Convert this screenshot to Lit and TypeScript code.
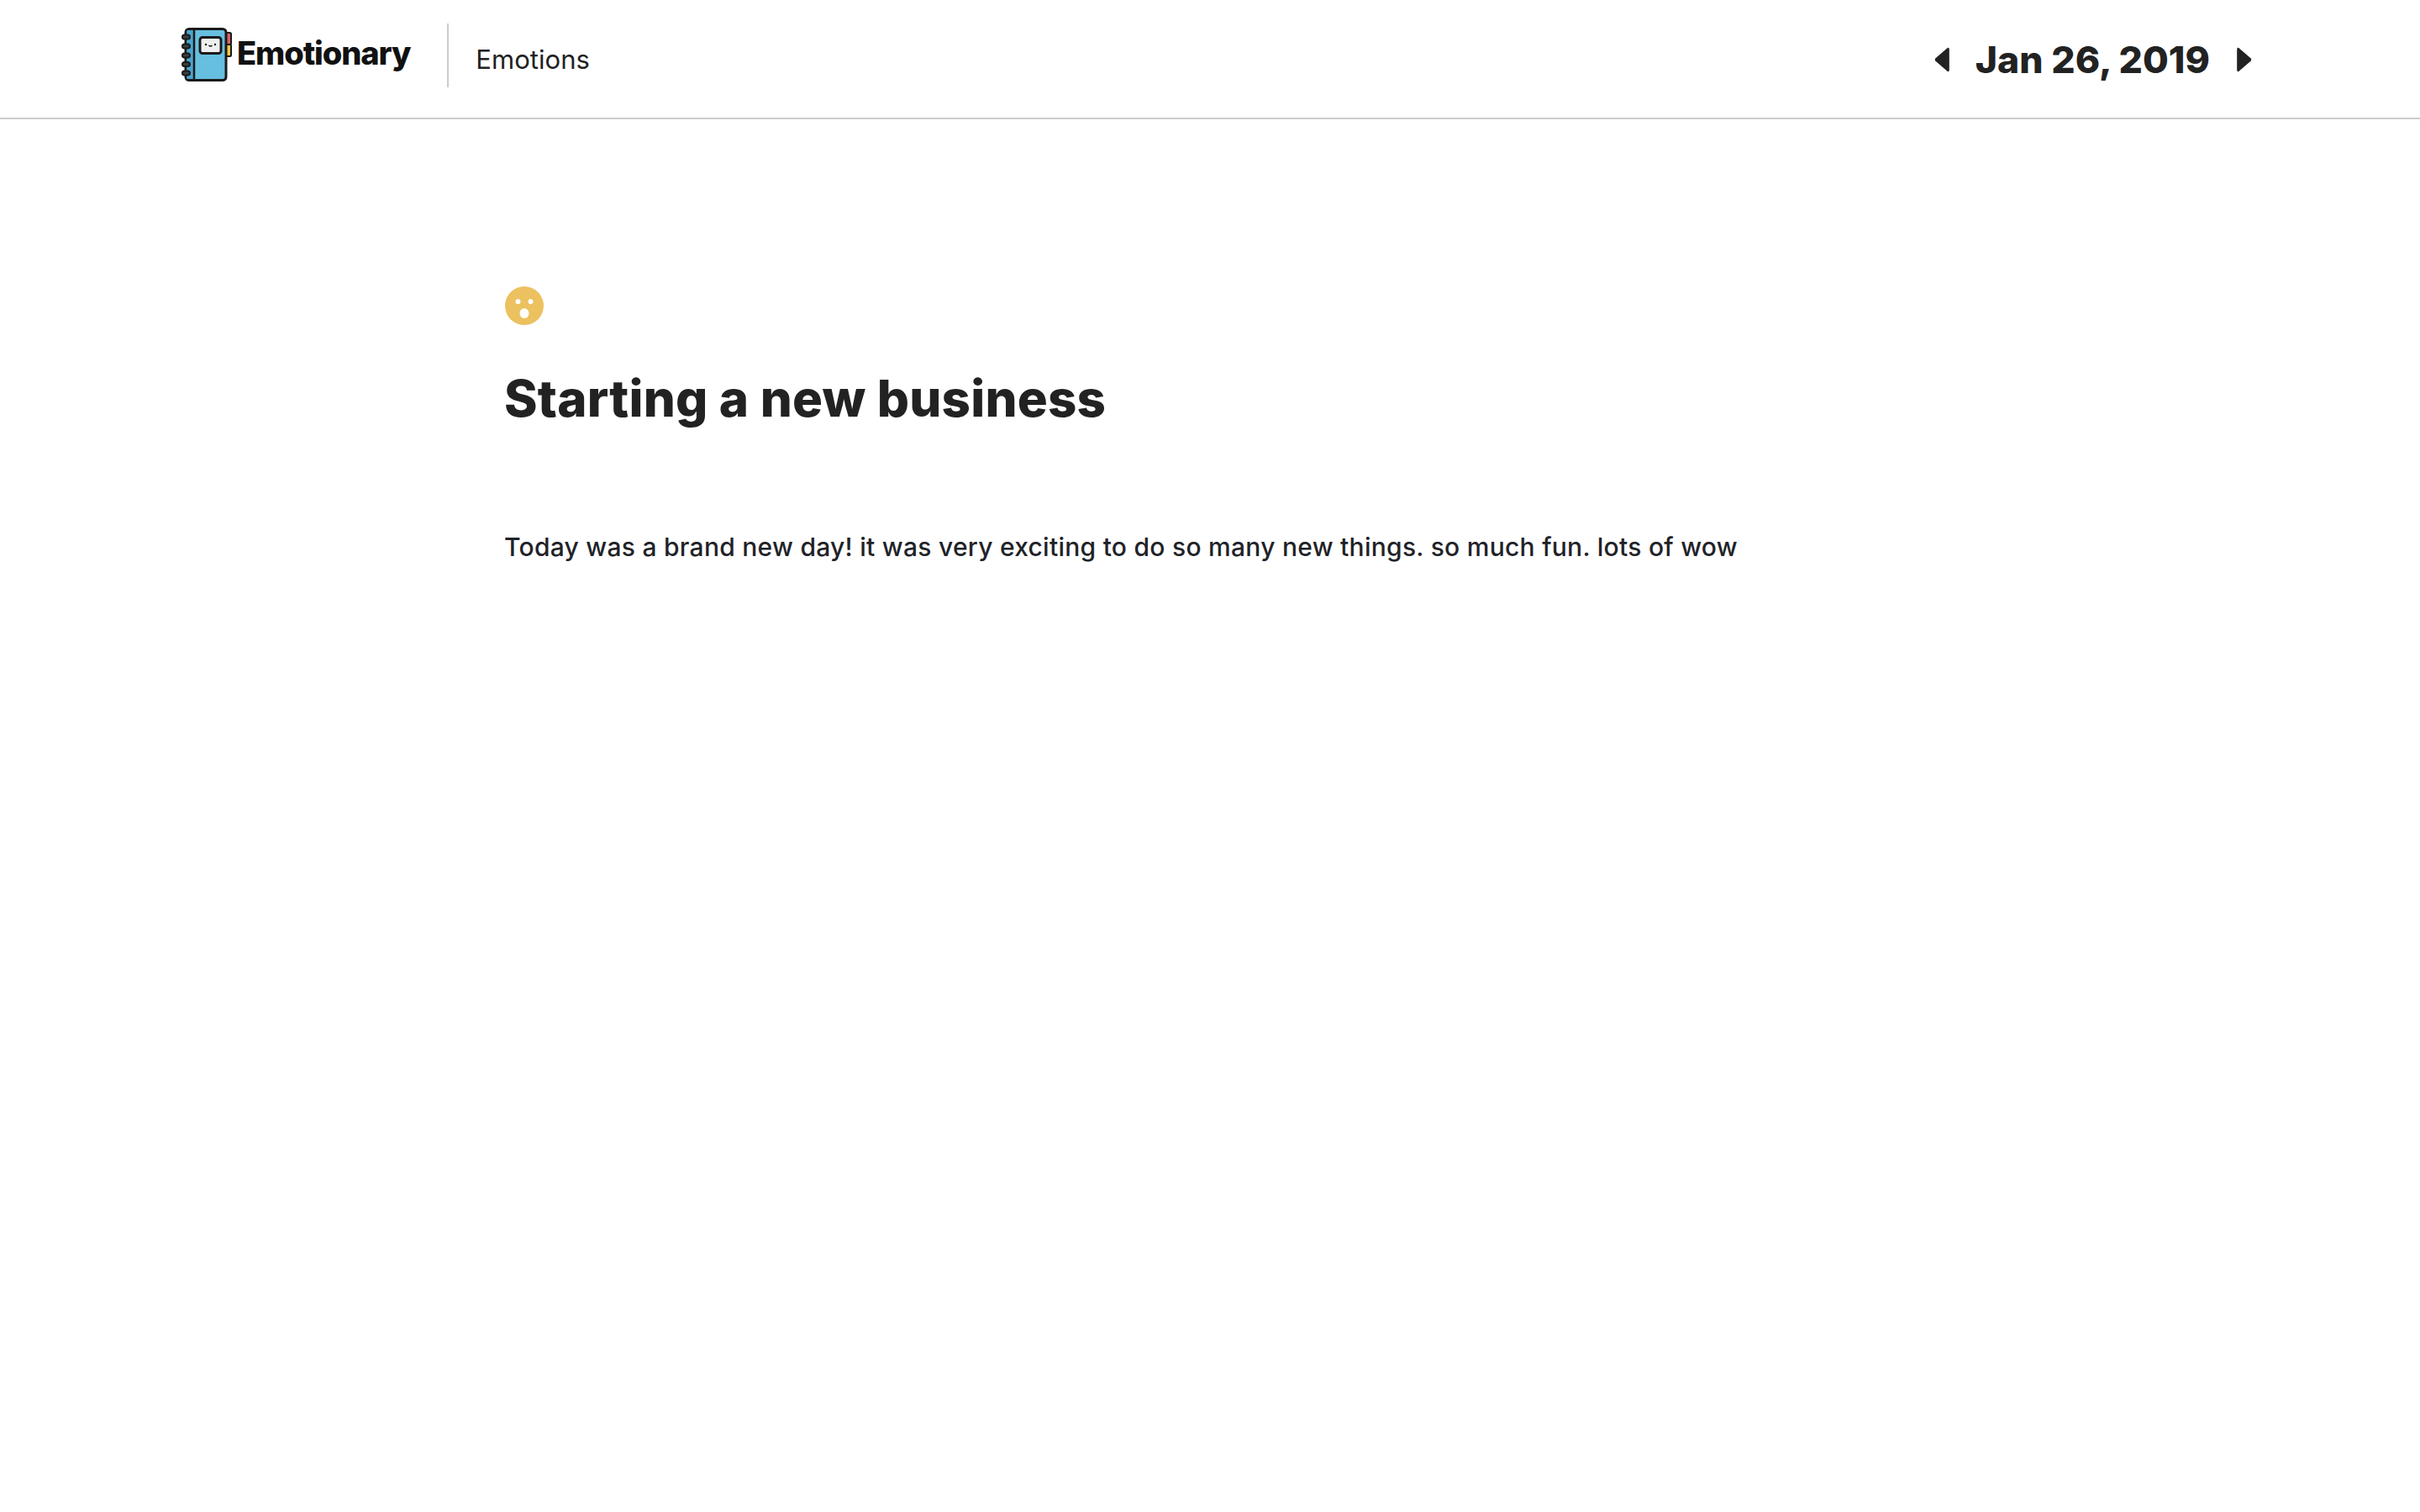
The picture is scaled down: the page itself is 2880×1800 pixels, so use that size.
import { LitElement, html, css } from "lit";
import { customElement } from "lit/decorators.js";

@customElement("app-root")
export class AppRoot extends LitElement {
  static styles = css`
    :host { display: block; width: 2880px; height: 1800px; background: #fff; color: #222; font-family: Inter, "Liberation Sans", sans-serif; }
    .header { box-sizing: border-box; height: 142px; border-bottom: 2px solid #ccc; display: flex; align-items: flex-start; justify-content: space-between; padding: 0 200px 0 216px; }
    .left { display: flex; align-items: flex-start; }
    .logo { display: flex; align-items: center; margin-top: 33px; }
    .logo svg { display: block; width: 60px; height: 64px; }
    .brand { font-weight: 800; font-size: 38px; line-height: 46px; letter-spacing: -1.1px; color: #111; margin-left: 6px; margin-top: -4px; }
    .divider { width: 2px; height: 76px; background: #ccc; margin: 28px 32px 0 44px; }
    .nav { font-size: 31px; line-height: 38px; margin-top: 52px; font-weight: 400; letter-spacing: 0.05px; }
    .date { display: flex; align-items: center; margin-top: 48px; }
    .date svg { display: block; width: 18px; height: 30px; fill: #222; }
    .date span { font-weight: 800; font-size: 44.5px; line-height: 46px; letter-spacing: 0.05px; margin: 0 32px 0 31px; }
    main { padding: 198px 0 0 600px; }
    .emoji { display: block; width: 48px; height: 48px; }
    h1 { margin: 48px 0 0; font-weight: 800; font-size: 60px; line-height: 76px; letter-spacing: 0.2px; }
    p { margin: 120px 0 0; font-weight: 500; font-size: 30px; line-height: 38px; letter-spacing: 0.27px; color: #1f2328; }
  `;

  render() {
    return html`
      <header class="header">
        <div class="left">
          <div class="logo">
            <svg viewBox="0 0 60 64">
              <rect x="50" y="6" width="9" height="14" rx="1.500" fill="#d9606a" stroke="#1a1a1a" stroke-width="2"/>
              <rect x="50" y="20" width="9" height="14" rx="1.500" fill="#f2c744" stroke="#1a1a1a" stroke-width="2"/>
              <rect x="5" y="1.500" width="48" height="61" rx="4" fill="#67bfe0" stroke="#1a1a1a" stroke-width="3"/>
              <path d="M6.500 3h8.500v58h-8.500z" fill="#4aa5cc"/>
              <path d="M15 2v60" stroke="#1a1a1a" stroke-width="2.500"/>
              <rect x="22" y="11.500" width="25" height="19" rx="3" fill="#f0f0f0" stroke="#1a1a1a" stroke-width="3"/>
              <circle cx="29" cy="20" r="1.200" fill="#1a1a1a"/><circle cx="40" cy="20" r="1.200" fill="#1a1a1a"/>
              <path d="M32.500 21q2 2 4 0" fill="none" stroke="#1a1a1a" stroke-width="1.500"/>
              <g fill="#3a3f42" stroke="#1a1a1a" stroke-width="2">
                <rect x="1" y="8.500" width="9" height="5" rx="2.500"/><rect x="1" y="19.500" width="9" height="5" rx="2.500"/><rect x="1" y="30.500" width="9" height="5" rx="2.500"/><rect x="1" y="41" width="9" height="5" rx="2.500"/><rect x="1" y="51.500" width="9" height="5" rx="2.500"/>
              </g>
            </svg>
            <span class="brand">Emotionary</span>
          </div>
          <div class="divider"></div>
          <div class="nav">Emotions</div>
        </div>
        <div class="date">
          <svg viewBox="0 0 17 29"><path d="M15 1q2-1 2 2v23q0 3-2 2L1 16q-1-1.500 0-3z"/></svg>
          <span>Jan 26, 2019</span>
          <svg viewBox="0 0 17 29"><path d="M2 1q-2-1-2 2v23q0 3 2 2L16 16q1-1.500 0-3z"/></svg>
        </div>
      </header>
      <main>
        <svg class="emoji" viewBox="0 0 48 48">
          <circle cx="24" cy="24" r="23" fill="#ecc15f"/>
          <circle cx="16.500" cy="19" r="3" fill="#fff"/><circle cx="31.500" cy="19" r="3" fill="#fff"/>
          <ellipse cx="24" cy="33" rx="5.500" ry="6" fill="#fff"/>
        </svg>
        <h1>Starting a new business</h1>
        <p>Today was a brand new day! it was very exciting to do so many new things. so much fun. lots of wow</p>
      </main>
    `;
  }
}
